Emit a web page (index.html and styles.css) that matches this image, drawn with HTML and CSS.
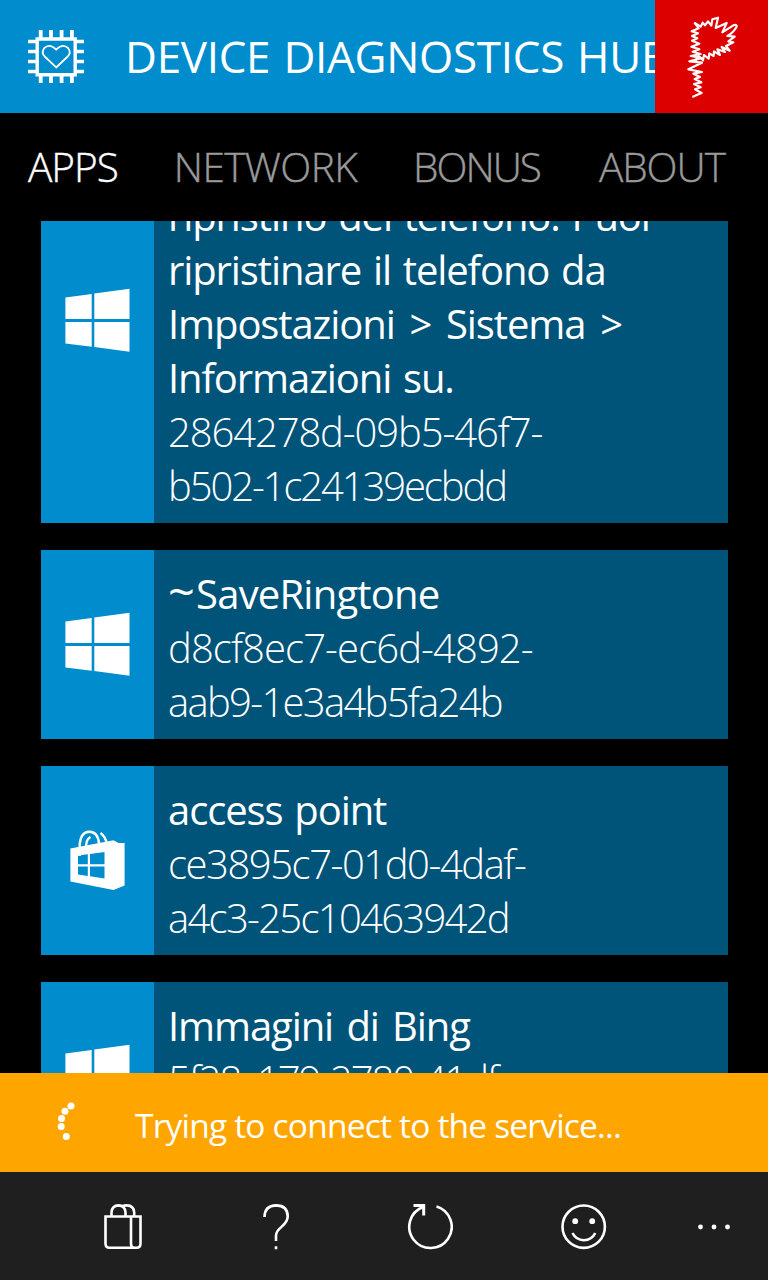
FILE: index.html
```
<!DOCTYPE html>
<html lang="en">

<head>
    <meta charset="UTF-8">
    <meta name="viewport" content="width=device-width, initial-scale=1.0">
    <title>Device Diagnostics HUB</title>
    <link rel="stylesheet" href="styles.css">
</head>

<body>
    <svg width="0" height="0" class="defs">
        <symbol id="win" viewBox="0 0 65 64">
            <path d="M.4 9.5 26.7 5.9V31H.4zM29.3 5.5 64.5.7V31H29.3zM.4 34H26.7V58.7L.4 55.4zM29.3 34H64.5V63.8L29.3 59.1z" />
        </symbol>
    </svg>
    <div class="header">
        <svg class="chip" viewBox="0 0 56 54">
            <path d="M9.2 9H47.2V44.7H9.2z" stroke-width="3.4" />
            <path d="M12.7 0V9M23 0V9M33.6 0V9M43.9 0V9M12.7 45V53M23 45V53M33.6 45V53M43.9 45V53" stroke-width="3.8" />
            <path d="M0 11.5H9M0 21.5H9M0 31.5H9M0 41.5H9M47 11.5H56M47 21.5H56M47 31.5H56M47 41.5H56" stroke-width="3.4" />
            <path d="M28.2 37.4 16.7 26.5Q13 22.5 16.2 18.2Q21.3 13 28.2 19.5Q35 13 40.2 18.2Q43.5 22.5 39.7 26.5z" stroke-width="1.8" />
        </svg>
        <h1>DEVICE DIAGNOSTICS HUB</h1>
        <div class="logo">
            <svg viewBox="45 0 339 339">
                <path d="M163 68 182 80 188 68 195 76 204 64 214 77 217 58 234 53 227 84 260 69 247 97 280 76Q291 72 290 80Q280 98 262 108L284 110 265 124 280 127 258 138 269 152 245 141 255 156 232 148 240 165 222 154 221 168 208 160 206 176 192 165 189 181 176 168 166 182" />
                <path d="M163 68 176 85 155 94 174 100 156 108 172 115 156 122 178 131 154 140 178 148 158 155 182 162 152 168 186 174 148 184 186 188 145 208 186 216 160 221 180 231 164 237 184 247 162 252 182 262 165 268 185 279 172 284 157 291" />
            </svg>
        </div>
    </div>
    <ul class="tabs">
        <li class="active">APPS</li>
        <li class="network">NETWORK</li>
        <li class="bonus">BONUS</li>
        <li class="about">ABOUT</li>
    </ul>
    <div class="list">
        <div class="card cut">
            <div class="icon"><svg class="win"><use href="#win" /></svg></div>
            <div class="text">
                <p class="name">ripristino del telefono. Puoi<br>ripristinare il telefono da<br><span class="path">Impostazioni &gt; Sistema &gt;</span><br>Informazioni su.</p>
                <p class="id s2">2864278d-09b5-46f7-</p>
                <p class="id s5">b502-1c24139ecbdd</p>
            </div>
        </div>
        <div class="card">
            <div class="icon"><svg class="win"><use href="#win" /></svg></div>
            <div class="text">
                <p class="name ring"><span>~</span>SaveRingtone</p>
                <p class="id s1">d8cf8ec7-ec6d-4892-</p>
                <p class="id s4">aab9-1e3a4b5fa24b</p>
            </div>
        </div>
        <div class="card">
            <div class="icon">
                <svg class="store" viewBox="0 0 56 60">
                    <path class="line" d="M9.7 26V14Q11 2 19 1.8Q27.5 1.5 29 13V22M16 24V16Q16.5 9 20.5 7M30.5 3Q35 6 37 14" />
                    <path fill-rule="evenodd" d="M.4 18.5 43.5 10.3 48.5 13H54.6V55.5L43.5 60 .4 51.5zM8 25.5V34.3H17.8V24.2zM20 24V34.3H34.5V22zM8 36.5V44.5L17.8 46V36.5zM20 36.5V46.3L34.5 48.4V36.5z" />
                </svg>
            </div>
            <div class="text">
                <p class="name">access point</p>
                <p class="id s3">ce3895c7-01d0-4daf-</p>
                <p class="id s4">a4c3-25c10463942d</p>
            </div>
        </div>
        <div class="card">
            <div class="icon"><svg class="win"><use href="#win" /></svg></div>
            <div class="text">
                <p class="name bing">Immagini di Bing</p>
                <p class="id s5">5f28c179-2780-41df-</p>
            </div>
        </div>
    </div>
    <div class="status">
        <svg viewBox="0 0 18 40">
            <circle cx="14" cy="4" r="3.5" />
            <circle cx="8" cy="9.3" r="3.5" />
            <circle cx="4.5" cy="16.6" r="3.5" />
            <circle cx="4.2" cy="24.6" r="3.5" />
            <circle cx="9.3" cy="34.6" r="3.5" />
        </svg>
        <span>Trying to connect to the service...</span>
    </div>
    <div class="bar">
        <svg viewBox="0 0 46 46">
            <path d="M5.5 12.5H40.5V39.5Q40.5 43.7 36.5 43.7H9.5Q5.5 43.7 5.5 39.5zM31 12.5V39.5Q31 43.7 34.5 43.7M11.5 12.5V8.5Q12 1.5 18.5 1.4Q25 1.5 25.5 8.5V12.5M22.5 2Q24.5 1.3 27 1.4Q33.7 1.5 34.2 8.5V12.5" />
        </svg>
        <svg viewBox="0 0 46 46">
            <path d="M10.5 13Q10.7 1.6 22 1.4Q33.7 1.6 33.7 12.5C33.7 22 22 23.5 22 31.5V37M22 42.3V45.3" />
        </svg>
        <svg viewBox="0 0 46 46">
            <path d="M29.5 2.500A21.200 21.200 0 1 1 16 3" />
            <path d="M6.5 1.5H16.7V11.5" stroke-linejoin="miter" stroke-width="3" />
        </svg>
        <svg viewBox="0 0 46 46">
            <circle cx="22.7" cy="22.7" r="21.2" />
            <path d="M11.5 29Q15 36 22.7 36.2Q31 36 34.2 29" />
            <g class="solid"><circle cx="14.2" cy="17.2" r="2.9" /><circle cx="31.2" cy="17.2" r="2.9" /></g>
        </svg>
        <svg class="more" viewBox="0 0 34 46">
            <g class="solid"><circle cx="3.5" cy="23" r="2.4" /><circle cx="17" cy="23" r="2.4" /><circle cx="30.5" cy="23" r="2.4" /></g>
        </svg>
    </div>
</body>

</html>
```

FILE: styles.css
```
* {
    margin: 0;
    padding: 0;
    box-sizing: border-box;
}

body {
    width: 768px;
    height: 1280px;
    overflow: hidden;
    display: flex;
    flex-direction: column;
    background-color: #000;
    color: #fff;
    font-family: "Open Sans", "Noto Sans", sans-serif;
}

li {
    list-style: none;
}

svg {
    display: block;
    flex: none;
}

.defs {
    position: absolute;
}

.header {
    height: 113px;
    flex: none;
    display: flex;
    align-items: center;
    background-color: #008ccd;
}

.chip {
    width: 56px;
    height: 54px;
    margin-left: 28px;
    fill: none;
    stroke: #fff;
}

.header h1 {
    flex: 1;
    min-width: 0;
    overflow: hidden;
    padding: 0 0 2px 41px;
    font-size: 44px;
    font-weight: 400;
    line-height: 60px;
    letter-spacing: -0.3px;
    word-spacing: 2px;
    white-space: nowrap;
}

.logo {
    flex: none;
    width: 113px;
    height: 113px;
    background-color: #d00;
}

.logo svg {
    fill: none;
    stroke: #fff;
    stroke-width: 6.5;
    stroke-linejoin: round;
}

.tabs {
    height: 108px;
    flex: none;
    display: flex;
    align-items: center;
    padding: 0 0 2px 28px;
    gap: 56px;
    font-size: 40.5px;
    font-weight: 300;
    letter-spacing: -1px;
    color: #999;
    -webkit-text-stroke: 0.4px;
}

.tabs .active {
    color: #fff;
}

.tabs .network {
    letter-spacing: -0.6px;
}

.tabs .bonus {
    letter-spacing: -2px;
}

.tabs .about {
    margin-left: 3px;
}

.list {
    height: 852px;
    flex: none;
    overflow: hidden;
    padding: 0 40px 0 41px;
}

.card {
    height: 189px;
    display: flex;
    margin-bottom: 27px;
    background-color: #005379;
}

.card.cut {
    height: 405px;
    margin-top: -103px;
}

.card.cut .text {
    padding-top: 71px;
}

.icon {
    width: 113px;
    flex: none;
    display: flex;
    align-items: center;
    justify-content: center;
    padding-bottom: 1px;
    background-color: #008ccd;
    fill: #fff;
}

.win {
    width: 65px;
    height: 64px;
}

.store {
    width: 56px;
    height: 60px;
}

.store .line {
    fill: none;
    stroke: #fff;
    stroke-width: 2.4;
}

.text {
    padding: 17px 0 0 14px;
    font-size: 40px;
    line-height: 54px;
    white-space: nowrap;
}

.name {
    letter-spacing: -1.1px;
    word-spacing: 2.5px;
}

.name .path {
    word-spacing: 5.5px;
}

.name.bing {
    word-spacing: 4px;
}

.name.ring {
    letter-spacing: -0.8px;
}

.ring span {
    margin-right: 2px;
    font-size: 47px;
    line-height: 1;
}

.id {
    font-weight: 300;
}

/* optical spacing of the ids, looser to tighter */
.s1 {
    letter-spacing: -0.9px;
}

.s2 {
    letter-spacing: -1.1px;
}

.s3 {
    letter-spacing: -1.45px;
}

.s4 {
    letter-spacing: -1.7px;
}

.s5 {
    letter-spacing: -2.1px;
}

.status {
    height: 99px;
    flex: none;
    display: flex;
    align-items: center;
    background-color: #ffa500;
    font-size: 33.5px;
    line-height: 46px;
    letter-spacing: -0.8px;
}

.status svg {
    width: 18px;
    height: 40px;
    margin: 0 60px 2px 57px;
    fill: #fff;
}

.status span {
    padding-top: 4px;
}

.bar {
    height: 108px;
    flex: none;
    display: flex;
    align-items: center;
    padding: 1px 0 0 100px;
    gap: 107.5px;
    background-color: #1f1f1f;
}

.bar svg {
    width: 46px;
    height: 46px;
    fill: none;
    stroke: #fff;
    stroke-width: 2.6;
}

.bar .more {
    width: 34px;
    margin-left: -17px;
}

.bar .solid {
    fill: #fff;
    stroke: none;
}
```
